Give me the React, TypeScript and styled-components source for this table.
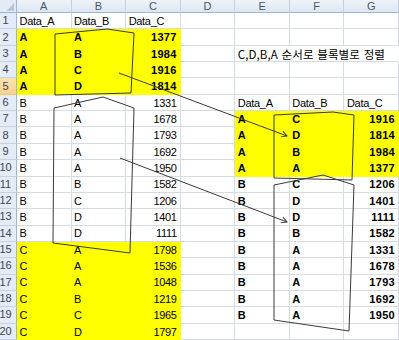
import React from 'react'
import styled, { createGlobalStyle } from 'styled-components'

const GlobalStyle = createGlobalStyle`
    html, body {
        margin: 0;
        padding: 0;
        background: #ffffff;
        overflow: hidden;
    }
`;

type CellData = { v?: string; bold?: boolean; fill?: boolean; num?: boolean; span?: number; korean?: boolean }

const COLS = ['A', 'B', 'C', 'D', 'E', 'F', 'G']

const left: [string, string, number][] = [
    ['A', 'A', 1377], ['A', 'B', 1984], ['A', 'C', 1916], ['A', 'D', 1814],
    ['B', 'A', 1331], ['B', 'A', 1678], ['B', 'A', 1793], ['B', 'A', 1692],
    ['B', 'A', 1950], ['B', 'B', 1582], ['B', 'C', 1206], ['B', 'D', 1401],
    ['B', 'D', 1111], ['C', 'A', 1798], ['C', 'A', 1536], ['C', 'A', 1048],
    ['C', 'B', 1219], ['C', 'C', 1965], ['C', 'D', 1797],
]

const right: [string, string, number][] = [
    ['A', 'C', 1916], ['A', 'D', 1814], ['A', 'B', 1984], ['A', 'A', 1377],
    ['B', 'C', 1206], ['B', 'D', 1401], ['B', 'D', 1111], ['B', 'B', 1582],
    ['B', 'A', 1331], ['B', 'A', 1678], ['B', 'A', 1793], ['B', 'A', 1692],
    ['B', 'A', 1950],
]

const buildRows = (): CellData[][] => {
    const rows: CellData[][] = []
    for (let r = 1; r <= 20; r++) {
        const row: CellData[] = COLS.map(() => ({}))
        if (r === 1) {
            row[0] = { v: 'Data_A' }
            row[1] = { v: 'Data_B' }
            row[2] = { v: 'Data_C' }
        } else {
            const [a, b, c] = left[r - 2]
            const strong = r <= 5
            const fill = r <= 5 || r >= 15
            row[0] = { v: a, bold: strong, fill }
            row[1] = { v: b, bold: strong, fill }
            row[2] = { v: String(c), bold: strong, fill, num: true }
        }
        if (r === 6) {
            row[4] = { v: 'Data_A' }
            row[5] = { v: 'Data_B' }
            row[6] = { v: 'Data_C' }
        } else if (r >= 7 && r <= 19) {
            const [a, b, c] = right[r - 7]
            const fill = r <= 10
            row[4] = { v: a, bold: true, fill }
            row[5] = { v: b, bold: true, fill }
            row[6] = { v: String(c), bold: true, fill, num: true }
        }
        if (r === 3) {
            row[4] = { v: 'C,D,B,A 순서로 블록별로 정렬', span: 3, korean: true }
            row[5] = { span: 0 }
            row[6] = { span: 0 }
        }
        rows.push(row)
    }
    return rows
}

const App = () => {
    const rows = buildRows()
    return (
        <>
            <GlobalStyle />
            <Sheet>
                <Corner>
                    <svg width="17" height="13" viewBox="0 0 17 13">
                        <polygon points="15,3 15,11 7,11" fill="#b7c3d3" />
                    </svg>
                </Corner>
                {COLS.map((c) => (
                    <ColHead key={c}>{c}</ColHead>
                ))}
                {rows.map((row, i) => (
                    <React.Fragment key={i}>
                        <RowHead $active={i + 1 === 5}>{i + 1}</RowHead>
                        {row.map((cell, j) =>
                            cell.span === 0 ? null : (
                                <Cell
                                    key={j}
                                    $fill={cell.fill}
                                    $bold={cell.bold}
                                    $num={cell.num}
                                    $span={cell.span}
                                    $korean={cell.korean}
                                >
                                    {cell.v}
                                </Cell>
                            )
                        )}
                    </React.Fragment>
                ))}
                <Overlay viewBox="0 0 399 340" width="399" height="340">
                    <defs>
                        <marker id="head" markerUnits="userSpaceOnUse" markerWidth="8" markerHeight="8" refX="6" refY="3.5" orient="auto">
                            <path d="M0.5,0.5 L6,3.5 L0.5,6.5" fill="none" stroke="#3a3a3a" strokeWidth="1" />
                        </marker>
                    </defs>
                    <g fill="none" stroke="#3a3a3a" strokeWidth="1">
                        <polygon points="55,34 107,29 134,33 131,93 55,95" />
                        <polygon points="54,108 103,97 134,108 130,253 53,243" />
                        <polygon points="274,115 333,112 354,115 352,180 274,178" />
                        <polygon points="274,185 323,175 354,185 349,331 274,320" />
                        <line x1="119" y1="73" x2="287" y2="136" markerEnd="url(#head)" />
                        <line x1="120" y1="158" x2="287" y2="222" markerEnd="url(#head)" />
                    </g>
                </Overlay>
            </Sheet>
        </>
    )
}

export default App

const Sheet = styled.div`
    position: relative;
    display: grid;
    grid-template-columns: 17px repeat(7, 1fr);
    grid-template-rows: 13px repeat(20, 1fr);
    width: 399px;
    height: 340px;
    background: #ffffff;
    overflow: hidden;
    font-family: "Liberation Sans", Arial, sans-serif;
`;

const Corner = styled.div`
    background: #e4ebf5;
    border-right: 1px solid #9eb6ce;
    border-bottom: 1px solid #9eb6ce;
    box-sizing: border-box;
    display: flex;
    svg {
        display: block;
    }
`;

const ColHead = styled.div`
    display: flex;
    align-items: center;
    justify-content: center;
    box-sizing: border-box;
    background: linear-gradient(#eef3fa, #dde6f2);
    border-right: 1px solid #c2cfe0;
    border-bottom: 1px solid #9eb6ce;
    color: #4c5566;
    font-size: 11px;
    line-height: 1;
    padding-top: 1px;
`;

const RowHead = styled.div<{ $active?: boolean }>`
    display: flex;
    align-items: center;
    justify-content: center;
    box-sizing: border-box;
    padding-right: 5px;
    background: ${(p) => (p.$active ? 'linear-gradient(#fbe3b3, #f8d28e)' : '#e4ecf7')};
    border-right: 1px solid #9eb6ce;
    border-bottom: 1px solid ${(p) => (p.$active ? '#f2c46f' : '#c5d2e3')};
    color: #3f4552;
    font-size: 11px;
    line-height: 1;
`;

const Cell = styled.div<{ $fill?: boolean; $bold?: boolean; $num?: boolean; $span?: number; $korean?: boolean }>`
    display: flex;
    align-items: flex-end;
    justify-content: ${(p) => (p.$num ? 'flex-end' : 'flex-start')};
    grid-column: ${(p) => (p.$span ? `span ${p.$span}` : 'auto')};
    box-sizing: border-box;
    padding: 0 3px ${(p) => (p.$korean ? '0.5px' : '1.5px')} 2.5px;
    background: ${(p) => (p.$fill ? '#ffff00' : 'transparent')};
    border-right: 1px solid ${(p) => (p.$fill ? '#ffff00' : p.$span ? 'transparent' : '#d6dbe3')};
    border-bottom: 1px solid ${(p) => (p.$fill ? '#ffff00' : '#d6dbe3')};
    color: #000000;
    font-family: ${(p) =>
        p.$korean ? '"Noto Sans CJK KR", "Liberation Sans", sans-serif' : '"Liberation Sans", Arial, sans-serif'};
    font-size: ${(p) => (p.$korean ? '11.5px' : '11px')};
    font-weight: ${(p) => (p.$bold ? 700 : 400)};
    letter-spacing: ${(p) => (p.$bold ? '0.3px' : p.$korean ? '0.1px' : '-0.3px')};
    word-spacing: ${(p) => (p.$korean ? '1px' : '0')};
    line-height: 1;
    white-space: nowrap;
    overflow: visible;
`;

const Overlay = styled.svg`
    position: absolute;
    left: 0;
    top: 0;
    pointer-events: none;
`;
